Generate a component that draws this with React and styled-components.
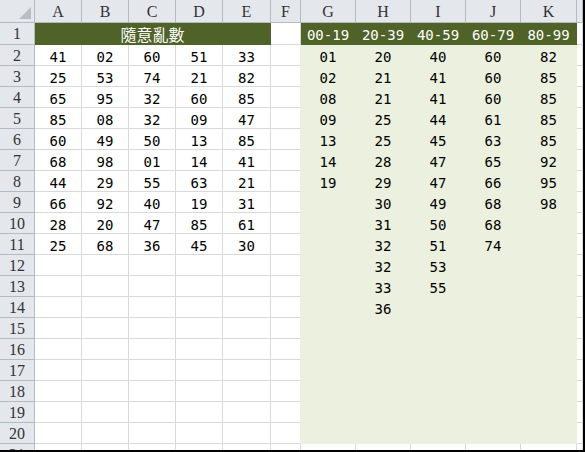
import React from 'react';
import styled, { createGlobalStyle } from 'styled-components';

const COLS = ['A', 'B', 'C', 'D', 'E', 'F', 'G', 'H', 'I', 'J', 'K', '']
const WIDTHS = [35, 47, 47, 47, 47, 48, 30, 55, 55, 55, 55, 56]
const ROWS = 21

const DARK = '#4f6228'
const LIGHT = '#ebf1de'
const GRID = '#d9d9d9'

const RANDOM = [
  ['41', '02', '60', '51', '33'],
  ['25', '53', '74', '21', '82'],
  ['65', '95', '32', '60', '85'],
  ['85', '08', '32', '09', '47'],
  ['60', '49', '50', '13', '85'],
  ['68', '98', '01', '14', '41'],
  ['44', '29', '55', '63', '21'],
  ['66', '92', '40', '19', '31'],
  ['28', '20', '47', '85', '61'],
  ['25', '68', '36', '45', '30'],
]

const RANGES = ['00-19', '20-39', '40-59', '60-79', '80-99']

const GROUPS = [
  ['01', '02', '08', '09', '13', '14', '19'],
  ['20', '21', '21', '25', '25', '28', '29', '30', '31', '32', '32', '33', '36'],
  ['40', '41', '41', '44', '45', '47', '47', '49', '50', '51', '53', '55'],
  ['60', '60', '60', '61', '63', '65', '66', '68', '68', '74'],
  ['82', '85', '85', '85', '85', '92', '95', '98'],
]

const GlobalStyle = createGlobalStyle`
  html, body {
    margin: 0;
    padding: 0;
    background: #fff;
    overflow: hidden;
  }
`

const Frame = styled.div`
  width: 585px;
  height: 452px;
  box-sizing: border-box;
  border-right: 2px solid #000;
  border-bottom: 2px solid #000;
  overflow: hidden;
  background: #fff;
`

const Sheet = styled.div`
  display: grid;
  grid-template-columns: ${WIDTHS.map((w) => w + 'px').join(' ')} 1fr;
  grid-template-rows: 23px 22px repeat(${ROWS - 1}, 21px);
`

const Head = styled.div`
  box-sizing: border-box;
  background: #e4e7eb;
  border-right: 1px solid #b5bac0;
  border-bottom: 1px solid #b5bac0;
  display: flex;
  align-items: center;
  justify-content: center;
  font-family: "Liberation Serif", "DejaVu Serif", serif;
  font-size: 16px;
  color: #333;
  padding-top: 1px;
`

const Corner = styled(Head)`
  position: relative;
  &::after {
    content: '';
    position: absolute;
    right: 3px;
    bottom: 3px;
    width: 0;
    height: 0;
    border-left: 12px solid transparent;
    border-bottom: 12px solid #b9bec4;
  }
`

const Cell = styled.div`
  box-sizing: border-box;
  background: ${(p) => p.$bg || '#fff'};
  border-right: 1px solid ${(p) => p.$rightLine || p.$line || GRID};
  border-bottom: 1px solid ${(p) => p.$line || GRID};
  grid-column: ${(p) => (p.$span ? `span ${p.$span}` : 'auto')};
  display: flex;
  align-items: center;
  justify-content: center;
  padding-top: 3px;
  font-family: "DejaVu Sans Mono", "Liberation Mono", monospace;
  font-size: 14px;
  color: ${(p) => p.$color || '#000'};
  white-space: nowrap;
  overflow: hidden;
`

const Title = styled(Cell)`
  font-family: "Noto Sans CJK TC", "Noto Sans CJK SC", sans-serif;
  font-size: 16px;
  padding-top: 0;
`

function cellAt(row, col) {
  // row: 1-based sheet row, col: 0-based sheet column (A = 0)
  if (row >= 2 && row <= 11 && col <= 4) return { text: RANDOM[row - 2][col] }
  if (col >= 6 && col <= 10 && row >= 2 && row <= 20) {
    return { text: GROUPS[col - 6][row - 2] || '', bg: LIGHT, line: LIGHT }
  }
  if (col === 5 && row >= 2 && row <= 20) return { rightLine: LIGHT }
  return {}
}

const App = () => {
  const rows = []
  for (let r = 1; r <= ROWS; r++) {
    const cells = [<Head key="h">{r}</Head>]
    if (r === 1) {
      cells.push(
        <Title key="t" $span={5} $bg={DARK} $line={DARK} $color="#fff">隨意亂數</Title>
      )
      cells.push(<Cell key="f" />)
      RANGES.forEach((label) =>
        cells.push(
          <Cell key={label} $bg={DARK} $line={DARK} $color="#fff">{label}</Cell>
        )
      )
      cells.push(<Cell key="l" />)
    } else {
      for (let c = 0; c < COLS.length; c++) {
        const { text, bg, line, rightLine } = cellAt(r, c)
        cells.push(
          <Cell key={c} $bg={bg} $line={line} $rightLine={rightLine}>{text}</Cell>
        )
      }
    }
    rows.push(<React.Fragment key={r}>{cells}</React.Fragment>)
  }

  return (
    <>
      <GlobalStyle />
      <Frame>
        <Sheet>
          <Corner />
          {COLS.map((c, i) => <Head key={i}>{c}</Head>)}
          {rows}
        </Sheet>
      </Frame>
    </>
  )
}

export default App
